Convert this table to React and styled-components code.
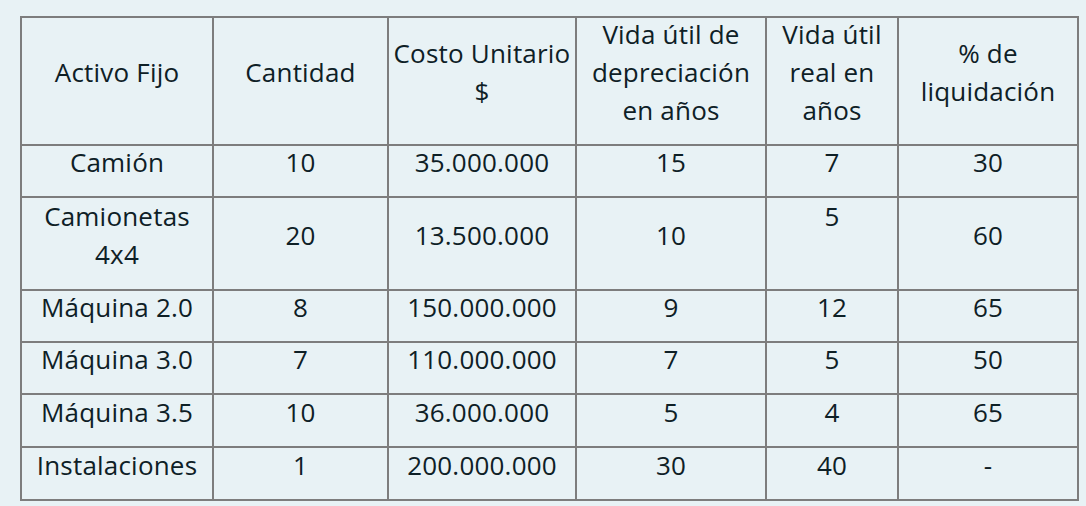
import React from 'react';
import styled, { createGlobalStyle } from 'styled-components';

const GlobalStyle = createGlobalStyle`
  html, body {
    margin: 0;
    background: #e8f2f5;
  }
  body {
    font-family: "Open Sans", "Liberation Sans", sans-serif;
    color: #0e2026;
  }
`;

const Page = styled.div`
  padding: 16px 0 0 20px;
`;

const Table = styled.table`
  border-collapse: collapse;
  table-layout: fixed;
  width: 1059px;
  border: 2px solid #7d7d7d;
  background: #e8f2f5;
`;

const Row = styled.tr`
  height: ${(p) => p.$h}px;
`;

const Cell = styled.td`
  border: 2px solid #7d7d7d;
  padding: 0 0 12px;
  text-align: center;
  vertical-align: middle;
  font-size: 26px;
  letter-spacing: 0.2px;
  line-height: 38px;
  font-weight: 400;
  white-space: nowrap;
`;

const Text = styled.div`
  margin: -3px 0 3px;
`;

const widths = [192, 175, 188, 190, 132, 180];

const header = [
  ['Activo Fijo'],
  ['Cantidad'],
  ['Costo Unitario', '$'],
  ['Vida útil de', 'depreciación', 'en años'],
  ['Vida útil', 'real en', 'años'],
  ['% de', 'liquidación'],
];

const rows = [
  { h: 52, cells: [['Camión'], ['10'], ['35.000.000'], ['15'], ['7'], ['30']] },
  { h: 93, cells: [['Camionetas', '4x4'], ['20'], ['13.500.000'], ['10'], ['5', '\u00a0'], ['60']] },
  { h: 52, cells: [['Máquina 2.0'], ['8'], ['150.000.000'], ['9'], ['12'], ['65']] },
  { h: 52, cells: [['Máquina 3.0'], ['7'], ['110.000.000'], ['7'], ['5'], ['50']] },
  { h: 53, cells: [['Máquina 3.5'], ['10'], ['36.000.000'], ['5'], ['4'], ['65']] },
  { h: 53, cells: [['Instalaciones'], ['1'], ['200.000.000'], ['30'], ['40'], ['-']] },
];

function Lines({ lines }) {
  return (
    <Text>
      {lines.map((l, i) => (
        <React.Fragment key={i}>
          {i > 0 && <br />}
          {l}
        </React.Fragment>
      ))}
    </Text>
  );
}

export default function App() {
  return (
    <Page>
      <GlobalStyle />
      <Table>
        <colgroup>
          {widths.map((w, i) => (
            <col key={i} style={{ width: w }} />
          ))}
        </colgroup>
        <tbody>
          <Row $h={128}>
            {header.map((c, i) => (
              <Cell key={i}>
                <Lines lines={c} />
              </Cell>
            ))}
          </Row>
          {rows.map((r, i) => (
            <Row key={i} $h={r.h}>
              {r.cells.map((c, j) => (
                <Cell key={j}>
                  <Lines lines={c} />
                </Cell>
              ))}
            </Row>
          ))}
        </tbody>
      </Table>
    </Page>
  );
}
